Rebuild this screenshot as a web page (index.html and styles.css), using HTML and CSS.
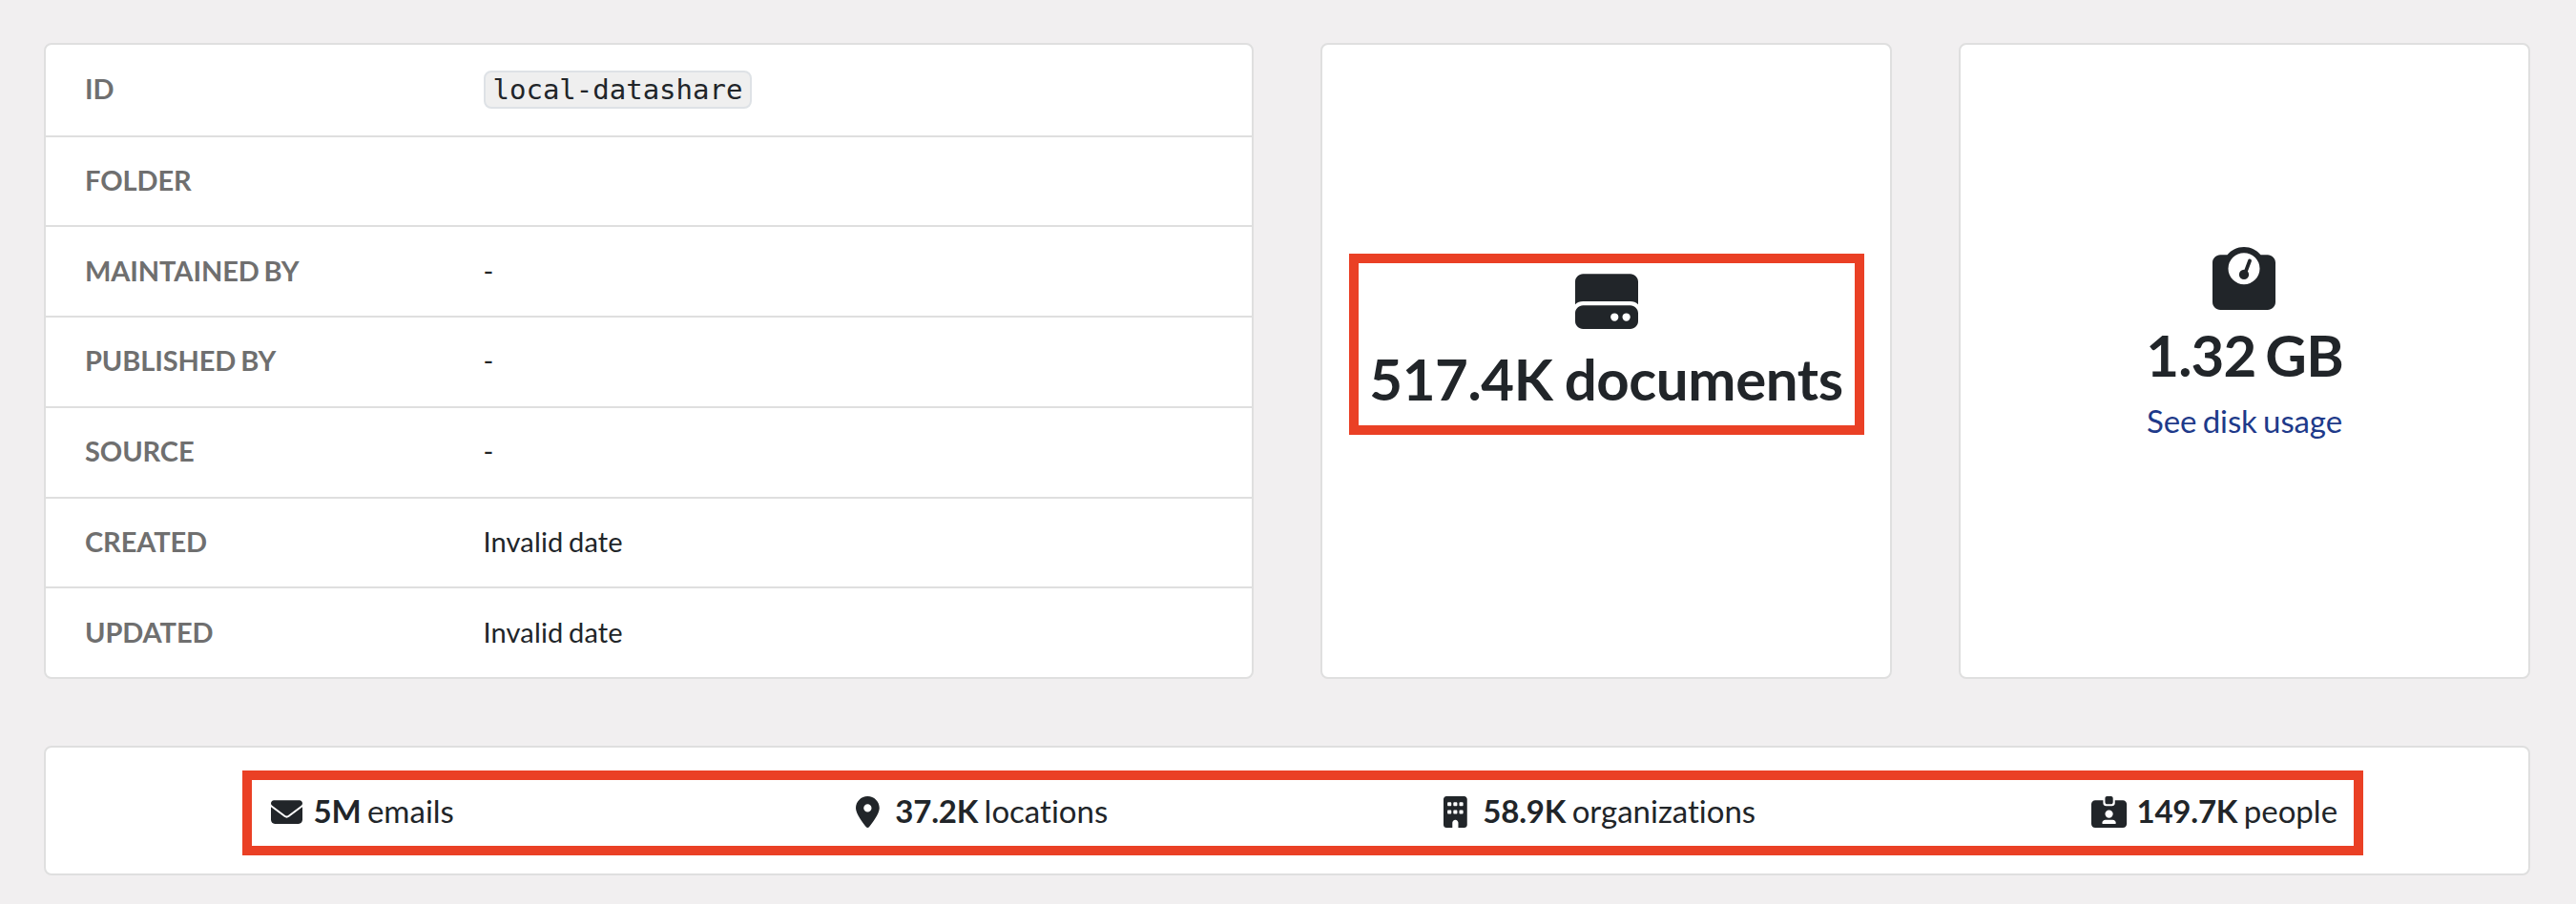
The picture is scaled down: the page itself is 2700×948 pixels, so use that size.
FILE: index.html
```html
<!DOCTYPE html>
<html lang="en">
<head>
<meta charset="utf-8">
<title>local-datashare</title>
<link rel="stylesheet" href="styles.css">
</head>
<body>
<main class="page">
  <div class="overview">
    <dl class="card details">
      <div class="details-row"><dt>ID</dt><dd class="tag-cell"><code class="tag">local-datashare</code></dd></div>
      <div class="details-row"><dt>FOLDER</dt><dd></dd></div>
      <div class="details-row"><dt>MAINTAINED BY</dt><dd>-</dd></div>
      <div class="details-row"><dt>PUBLISHED BY</dt><dd>-</dd></div>
      <div class="details-row"><dt>SOURCE</dt><dd>-</dd></div>
      <div class="details-row"><dt>CREATED</dt><dd>Invalid date</dd></div>
      <div class="details-row"><dt>UPDATED</dt><dd>Invalid date</dd></div>
    </dl>
    <section class="card metric">
      <div class="metric-highlight">
        <svg class="metric-icon" viewBox="0 0 512 512"><path d="M0 96C0 60.7 28.7 32 64 32H448c35.3 0 64 28.7 64 64V280.4c-17-15.2-39.4-24.4-64-24.4H64c-24.6 0-47 9.2-64 24.4V96zM64 288H448c35.3 0 64 28.7 64 64v64c0 35.3-28.7 64-64 64H64c-35.3 0-64-28.7-64-64V352c0-35.3 28.7-64 64-64zM320 416a32 32 0 1 0 0-64 32 32 0 1 0 0 64zm128-32a32 32 0 1 0 -64 0 32 32 0 1 0 64 0z" fill-rule="evenodd"/></svg>
        <strong class="metric-value">517.4K documents</strong>
      </div>
    </section>
    <section class="card metric">
      <div class="metric-body">
        <svg class="metric-icon" viewBox="0 0 512 512"><path fill-rule="evenodd" d="M128 176a128 128 0 1 1 256 0 128 128 0 1 1 -256 0zM391.8 64C359.5 24.9 310.7 0 256 0S152.5 24.9 120.2 64H64C28.7 64 0 92.7 0 128V448c0 35.3 28.7 64 64 64H448c35.3 0 64-28.7 64-64V128c0-35.3-28.7-64-64-64H391.8z"/><circle cx="256" cy="224" r="40"/><path class="needle" d="M266 210L303 112"/></svg>
        <strong class="metric-value metric-value-size">1.32 GB</strong>
        <a class="metric-link">See disk usage</a>
      </div>
    </section>
  </div>
  <section class="card entities">
    <div class="entity"><span class="entity-icon"><svg viewBox="0 0 512 512"><path d="M48 64C21.5 64 0 85.5 0 112c0 15.1 7.1 29.3 19.2 38.4L236.8 313.6c11.4 8.5 27 8.5 38.4 0L492.8 150.4c12.1-9.1 19.2-23.3 19.2-38.4c0-26.5-21.5-48-48-48H48zM0 176V384c0 35.3 28.7 64 64 64H448c35.3 0 64-28.7 64-64V176L294.4 339.2c-22.8 17.1-54 17.1-76.8 0L0 176z"/></svg></span><span><b>5M</b> emails</span></div>
    <div class="entity"><span class="entity-icon"><svg viewBox="0 0 384 512"><path fill-rule="evenodd" d="M215.7 499.2C267 435 384 279.4 384 192C384 86 298 0 192 0S0 86 0 192c0 87.4 117 243 168.3 307.2c12.3 15.3 35.1 15.3 47.4 0zM192 128a64 64 0 1 1 0 128 64 64 0 1 1 0-128z"/></svg></span><span><b>37.2K</b> locations</span></div>
    <div class="entity"><span class="entity-icon"><svg viewBox="0 0 384 512"><path fill-rule="evenodd" d="M48 0C21.5 0 0 21.5 0 48V464c0 26.5 21.5 48 48 48h96V432c0-26.5 21.5-48 48-48s48 21.5 48 48v80h96c26.5 0 48-21.5 48-48V48c0-26.5-21.5-48-48-48H48zM64 240c0-8.8 7.2-16 16-16h32c8.8 0 16 7.2 16 16v32c0 8.8-7.2 16-16 16H80c-8.8 0-16-7.2-16-16V240zm112-16h32c8.8 0 16 7.2 16 16v32c0 8.8-7.2 16-16 16H176c-8.8 0-16-7.2-16-16V240c0-8.8 7.2-16 16-16zm80 16c0-8.8 7.2-16 16-16h32c8.8 0 16 7.2 16 16v32c0 8.8-7.2 16-16 16H272c-8.8 0-16-7.2-16-16V240zM80 96h32c8.8 0 16 7.2 16 16v32c0 8.8-7.2 16-16 16H80c-8.8 0-16-7.2-16-16V112c0-8.8 7.2-16 16-16zm80 16c0-8.8 7.2-16 16-16h32c8.8 0 16 7.2 16 16v32c0 8.8-7.2 16-16 16H176c-8.8 0-16-7.2-16-16V112zM272 96h32c8.8 0 16 7.2 16 16v32c0 8.8-7.2 16-16 16H272c-8.8 0-16-7.2-16-16V112c0-8.8 7.2-16 16-16z"/></svg></span><span><b>58.9K</b> organizations</span></div>
    <div class="entity"><span class="entity-icon"><svg viewBox="0 0 576 512"><path fill-rule="evenodd" d="M256 0h64c17.7 0 32 14.3 32 32V96c0 17.7-14.3 32-32 32H256c-17.7 0-32-14.3-32-32V32c0-17.7 14.3-32 32-32zM64 64H192v48c0 26.5 21.5 48 48 48h96c26.5 0 48-21.5 48-48V64H512c35.3 0 64 28.7 64 64V448c0 35.3-28.7 64-64 64H64c-35.3 0-64-28.7-64-64V128C0 92.7 28.7 64 64 64zM176 437.3c0 5.9 4.8 10.7 10.7 10.7H389.3c5.9 0 10.7-4.8 10.7-10.7c0-29.5-23.9-53.3-53.3-53.3H229.3c-29.5 0-53.3 23.9-53.3 53.3zM288 352a64 64 0 1 0 0-128 64 64 0 1 0 0 128z"/></svg></span><span><b>149.7K</b> people</span></div>
    <div class="entities-outline"></div>
  </section>
</main>
</body>
</html>
```
FILE: styles.css
```css
* { box-sizing: border-box; }
body {
  margin: 0;
  background: #f1eff0;
  color: #212529;
  font-family: Lato, sans-serif;
  font-size: 33px;
  font-variant-ligatures: none;
  word-spacing: -2px;
}
.page {
  height: 948px;
  padding: 45px 48px 30px 46px;
  display: flex;
  flex-direction: column;
  gap: 70px;
}
.overview {
  height: 667px;
  display: grid;
  grid-template-columns: 1268px 599px 599px;
  column-gap: 70px;
}
.card {
  margin: 0;
  background: #fff;
  border: 2px solid #dfdfdf;
  border-radius: 8px;
}
.details {
  display: grid;
  grid-template-rows: repeat(7, 1fr);
  font-size: 29px;
}
.details-row {
  display: grid;
  grid-template-columns: 417.5px 1fr;
  align-items: center;
  padding: 0 0 3px 41px;
}
.details-row + .details-row { border-top: 2px solid #dfdfdf; }
.details dt { font-weight: 700; color: #6f6f6f; letter-spacing: -0.1px; }
.details dd { margin: 0; letter-spacing: 0.15px; }
.details .tag-cell { display: flex; padding-top: 2px; letter-spacing: 0; }
.tag {
  padding: 0 8px;
  border: 2px solid #dee2e6;
  border-radius: 8px;
  background: #efefef;
  font: 29px/36px "DejaVu Sans Mono", monospace;
}
.metric {
  display: flex;
  justify-content: center;
}
.metric svg, .entity svg { fill: currentColor; }
.metric-highlight {
  width: 540px;
  height: 190px;
  margin-top: 219px;
  padding-top: 7px;
  border: 10px solid #ea4025;
}
.metric-highlight, .metric-body {
  display: flex;
  flex-direction: column;
  align-items: center;
}
.metric-body { padding-top: 212px; }
.metric-icon { width: 66px; height: 66px; flex: none; }
.needle { stroke: currentColor; stroke-width: 30; stroke-linecap: round; }
.metric-value {
  margin-top: 12px;
  font-size: 60px;
  line-height: 72px;
  letter-spacing: -0.4px;
  white-space: nowrap;
}
.metric-value-size {
  margin-top: 11px;
  letter-spacing: -0.8px;
  word-spacing: -4px;
}
.metric-link {
  margin-top: 8px;
  color: #1e3a8a;
  line-height: 50px;
  letter-spacing: -0.1px;
}
.entities {
  position: relative;
  height: 136px;
  padding: 0 6px;
  display: grid;
  grid-template-columns: repeat(4, 1fr);
  align-items: center;
}
.entity {
  display: flex;
  align-items: center;
  justify-content: center;
  gap: 8px;
}
.entity b { letter-spacing: -0.2px; }
.entity-icon {
  width: 41px;
  height: 33px;
  margin-top: 3px;
  display: flex;
  justify-content: center;
}
.entity-icon svg { height: 33px; }
.entities-outline {
  position: absolute;
  left: 206px;
  top: 24px;
  width: 2223px;
  height: 89px;
  border: 10px solid #ea4025;
}
```
